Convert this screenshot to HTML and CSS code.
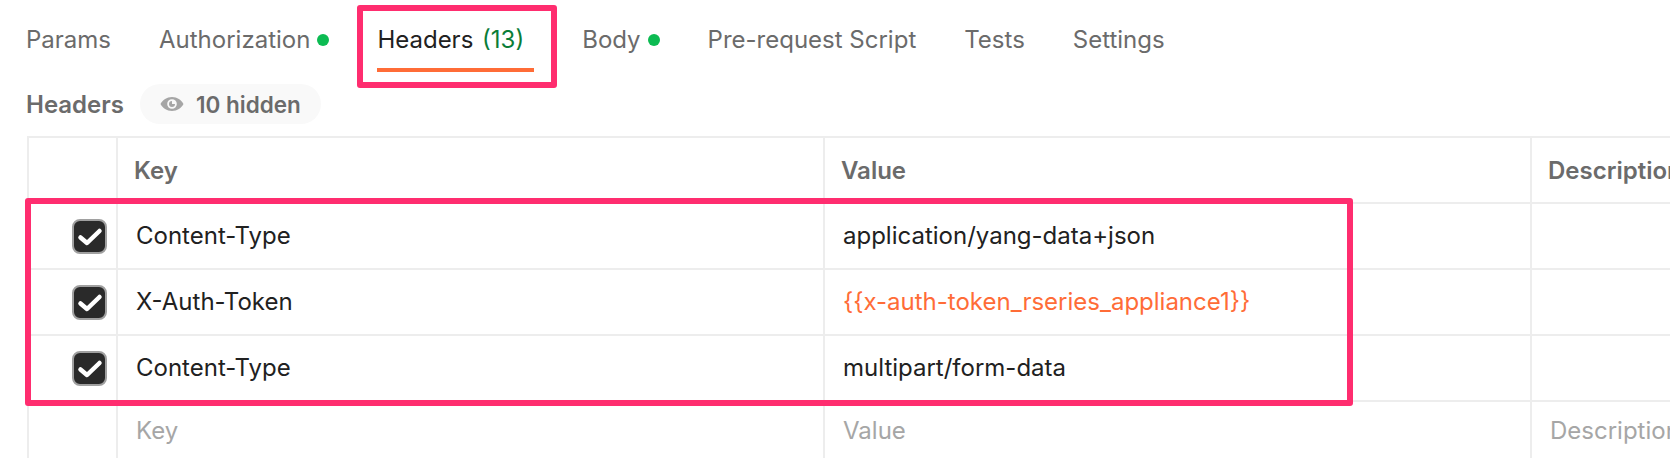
FILE: index.html
```html
<!DOCTYPE html>
<html lang="en">
<head>
<meta charset="utf-8">
<title>Headers</title>
<link rel="stylesheet" href="styles.css">
</head>
<body>
<div class="page">
  <nav class="tabs">
    <span class="tab">Params</span>
    <span class="tab">Authorization<i class="dot"></i></span>
    <span class="tab active">Headers <em class="count">(13)</em></span>
    <span class="tab">Body<i class="dot"></i></span>
    <span class="tab">Pre-request Script</span>
    <span class="tab">Tests</span>
    <span class="tab">Settings</span>
  </nav>
  <div class="subhead">
    <span class="subtitle">Headers</span>
    <span class="pill">
      <svg class="eye" viewBox="0 0 24 16" width="24" height="16"><path fill="#a6a6a6" fill-rule="evenodd" d="M12 1C6.8 1 2.6 4 .5 8c2.100 4 6.300 7 11.500 7s9.400-3 11.500-7C21.400 4 17.200 1 12 1zm0 2.200a4.800 4.800 0 1 1 0 9.600 4.800 4.800 0 0 1 0-9.600z"/><path fill="#a6a6a6" d="M12 5a3 3 0 1 0 3 3h-3z"/></svg>
      10 hidden
    </span>
  </div>
  <div class="table">
    <div class="cell head"></div><div class="cell head">Key</div><div class="cell head">Value</div><div class="cell head">Description</div>

    <div class="cell check"><span class="box"><svg viewBox="0 0 26 24" width="26" height="24"><path d="M3.500 13.500L10 19L22.500 7" fill="none" stroke="#fff" stroke-width="4.500" stroke-linecap="round" stroke-linejoin="round"/></svg></span></div>
    <div class="cell">Content-Type</div><div class="cell">application/yang-data+json</div><div class="cell"></div>

    <div class="cell check"><span class="box"><svg viewBox="0 0 26 24" width="26" height="24"><path d="M3.500 13.500L10 19L22.500 7" fill="none" stroke="#fff" stroke-width="4.500" stroke-linecap="round" stroke-linejoin="round"/></svg></span></div>
    <div class="cell">X-Auth-Token</div><div class="cell var">{{x-auth-token_rseries_appliance1}}</div><div class="cell"></div>

    <div class="cell check"><span class="box"><svg viewBox="0 0 26 24" width="26" height="24"><path d="M3.500 13.500L10 19L22.500 7" fill="none" stroke="#fff" stroke-width="4.500" stroke-linecap="round" stroke-linejoin="round"/></svg></span></div>
    <div class="cell">Content-Type</div><div class="cell">multipart/form-data</div><div class="cell"></div>

    <div class="cell last"></div><div class="cell last ph">Key</div><div class="cell last ph">Value</div><div class="cell last ph">Description</div>
  </div>
  <div class="mark mark-tab"></div>
  <div class="mark mark-rows"></div>
</div>
</body>
</html>
```
FILE: styles.css
```css
* { box-sizing: border-box; }
html, body { margin: 0; padding: 0; background: #fff; }
body { width: 1670px; height: 458px; overflow: hidden; }
.page {
  position: relative;
  width: 1670px;
  height: 458px;
  overflow: hidden;
  font-family: Inter, "Liberation Sans", sans-serif;
  color: #212121;
}
.tabs {
  display: flex;
  gap: 48px;
  height: 72px;
  padding-left: 26px;
  padding-top: 23px;
  font-size: 24px;
  line-height: 33px;
  color: #6b6b6b;
}
.tab { display: flex; align-items: flex-start; height: 49px; white-space: pre; }
.tab.active {
  color: #212121;
  border-bottom: 4px solid #ff6c37;
  padding-right: 10px;
}
.count { font-style: normal; color: #0a7d37; margin-left: 2px; }
.dot {
  width: 12px;
  height: 12px;
  margin: 11px 0 0 7px;
  border-radius: 50%;
  background: #0cbb52;
}
.subhead {
  display: flex;
  align-items: center;
  gap: 16px;
  height: 40px;
  margin-top: 12px;
  padding-left: 26px;
}
.subtitle { font-size: 24px; font-weight: 600; color: #6b6b6b; }
.pill {
  display: flex;
  align-items: center;
  gap: 12px;
  height: 40px;
  padding: 0 20px;
  border-radius: 20px;
  background: #f9f9f9;
  font-size: 22.5px;
  font-weight: 600;
  color: #6b6b6b;
}
.table {
  display: grid;
  grid-template-columns: 89px 707px 707px 300px;
  grid-template-rows: 66px 66px 66px 66px 66px;
  margin: 12px 0 0 27px;
  border-left: 2px solid #ededed;
  border-top: 2px solid #ededed;
  width: 1806px;
  font-size: 24px;
}
.cell {
  display: flex;
  align-items: center;
  padding-left: 18px;
  padding-bottom: 2px;
  border-right: 2px solid #ededed;
  border-bottom: 2px solid #ededed;
  white-space: nowrap;
}
.head { font-weight: 600; color: #6b6b6b; padding-left: 16px; padding-bottom: 0; }
.check { padding-left: 43px; padding-bottom: 0; }
.box {
  display: flex;
  align-items: center;
  justify-content: center;
  width: 35px;
  height: 35px;
  border: 2px solid #a0a0a0;
  border-radius: 8px;
  background: #2a2a2a;
}
.var { color: #ff6c37; }
.last { border-bottom: 0; padding-bottom: 10px; }
.ph { color: #a6a6a6; }
.mark {
  position: absolute;
  border: 6px solid #ff2d6f;
  border-radius: 3px;
}
.mark-tab { left: 357px; top: 5px; width: 200px; height: 83px; }
.mark-rows { left: 25px; top: 198px; width: 1328px; height: 208px; }
```
